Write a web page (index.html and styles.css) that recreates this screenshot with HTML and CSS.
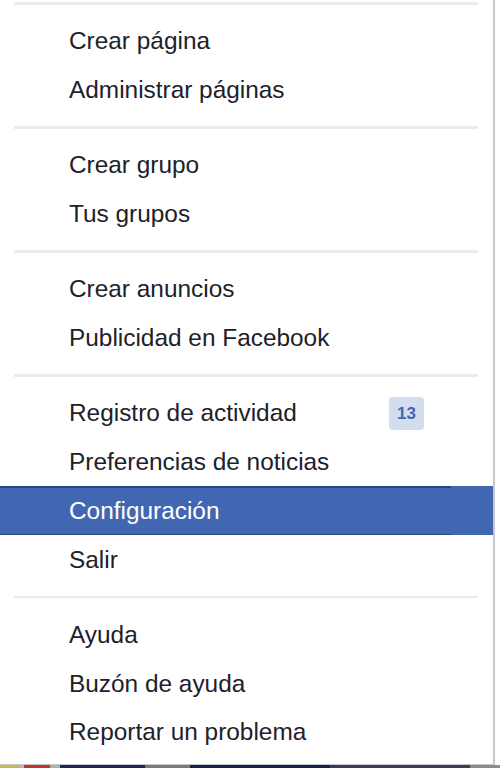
FILE: index.html
```html
<!DOCTYPE html>
<html>
<head>
  <title>Menú de cuenta</title>
  <link rel="stylesheet" href="styles.css">
</head>
<body>
  <div class="menu">
    <div class="separator"></div>
    <a class="item" href="#">Crear página</a>
    <a class="item" href="#">Administrar páginas</a>
    <div class="separator"></div>
    <a class="item" href="#">Crear grupo</a>
    <a class="item" href="#">Tus grupos</a>
    <div class="separator"></div>
    <a class="item" href="#">Crear anuncios</a>
    <a class="item" href="#">Publicidad en Facebook</a>
    <div class="separator"></div>
    <a class="item" href="#">Registro de actividad <span class="badge">13</span></a>
    <a class="item" href="#">Preferencias de noticias</a>
    <a class="item selected" href="#">Configuración</a>
    <a class="item" href="#">Salir</a>
    <div class="separator"></div>
    <a class="item" href="#">Ayuda</a>
    <a class="item" href="#">Buzón de ayuda</a>
    <a class="item" href="#">Reportar un problema</a>
  </div>
  <div class="page-strip"></div>
</body>
</html>
```

FILE: styles.css
```css
html, body {
  margin: 0;
  padding: 0;
}

body {
  width: 500px;
  height: 768px;
  overflow: hidden;
  background-color: #fff;
  font-family: "Liberation Sans", Arial, sans-serif;
}

.menu {
  width: 495px;
  height: 765px;
  box-sizing: border-box;
  padding-top: 2px;
  background-color: #fff;
  border-right: 2px solid #c6c7ca;
  border-bottom: 1px solid #c6c7ca;
}

.separator {
  height: 2.5px;
  margin: 0 15px 12px 14px;
  background-color: #e9ebee;
}

.item + .separator {
  margin-top: 12px;
}

.item {
  position: relative;
  display: flex;
  align-items: center;
  justify-content: space-between;
  height: 48.8px;
  padding: 0 69px 0 69px;
  font-size: 24.4px;
  color: #1d2129;
  text-decoration: none;
}

.item.selected {
  background-color: #4267b2;
  color: #fff;
}

.item.selected::before,
.item.selected::after {
  content: "";
  position: absolute;
  left: 0;
  width: 451px;
  height: 1.5px;
  background-color: #29487d;
}

.item.selected::before {
  top: 0;
}

.item.selected::after {
  bottom: 0;
}

.badge {
  display: flex;
  align-items: center;
  justify-content: center;
  width: 35px;
  height: 33px;
  margin-top: 1px;
  border-radius: 4px;
  background-color: #d3ddf0;
  color: #4267b2;
  font-size: 17px;
  font-weight: bold;
}

.page-strip {
  height: 3px;
  background: linear-gradient(to right,
    #c9b84a 0, #c9b84a 20px,
    #b8b8b8 20px, #b8b8b8 24px,
    #c3342f 24px, #c3342f 50px,
    #b0b0b0 50px, #b0b0b0 60px,
    #1f2458 60px, #1f2458 145px,
    #7a7a7a 145px, #7a7a7a 190px,
    #16204a 190px, #16204a 330px,
    #3a3e55 330px, #3a3e55 470px,
    #8c8c8c 470px, #8c8c8c 500px);
}
```
